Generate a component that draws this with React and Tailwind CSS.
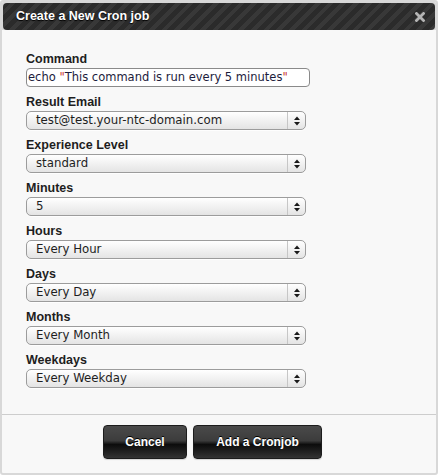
import React from "react";

const fields = [
  ["Result Email", "test@test.your-ntc-domain.com"],
  ["Experience Level", "standard"],
  ["Minutes", "5"],
  ["Hours", "Every Hour"],
  ["Days", "Every Day"],
  ["Months", "Every Month"],
  ["Weekdays", "Every Weekday"],
];

function Label({ children }) {
  return (
    <div className="h-[15px] text-[12.5px] leading-[15px] font-bold text-[#1e1e1e] font-['Liberation_Sans',Arial,sans-serif]">
      {children}
    </div>
  );
}

function Select({ value }) {
  return (
    <div className="mt-[1px] flex h-[19px] w-[280px] items-stretch rounded-[5px] border border-[#9c9c9c] bg-[linear-gradient(to_bottom,#ffffff,#e4e4e4)] shadow-[0_1px_0_rgba(255,255,255,0.8)]">
      <span className="flex flex-1 items-center pl-[9px] text-[11.75px] leading-none text-[#1e1e1e] font-['DejaVu_Sans',sans-serif]">
        {value}
      </span>
      <span className="flex w-[18px] items-center justify-center border-l border-[#c6c6c6]">
        <svg width="6" height="10" viewBox="0 0 6 10">
          <polygon points="0,4 3,0.5 6,4" fill="#1a1a1a" />
          <polygon points="0,6 3,9.5 6,6" fill="#1a1a1a" />
        </svg>
      </span>
    </div>
  );
}

function Button({ children, w }) {
  return (
    <button
      className={`${w} h-[34px] rounded-[4px] border border-[#1c1c1c] bg-[linear-gradient(to_bottom,#4a4a4a_0%,#3c3c3c_46%,#0c0c0c_58%,#222222_82%,#333333_100%)] text-[12px] font-bold text-white font-['Liberation_Sans',Arial,sans-serif] [text-shadow:0_-1px_0_#000] shadow-[0_1px_1px_rgba(0,0,0,0.15)]`}
    >
      {children}
    </button>
  );
}

export default function App() {
  return (
    <div className="flex h-[475px] w-[438px] flex-col overflow-hidden rounded-[3px] border-2 border-[#d8d8d8] bg-[#f8f8f8]">
      <div className="bg-[#d8d8d8] px-[1px] pt-[1px]">
        <div className="flex h-[27px] items-center justify-between rounded-[4px] bg-[repeating-linear-gradient(135deg,#2b2b2b_0px,#2b2b2b_5px,#383838_5px,#383838_9px)] pl-[13px] pr-[10px]">
          <span className="text-[12.5px] font-bold text-white font-['Liberation_Sans',Arial,sans-serif] [text-shadow:0_1px_1px_#000]">
            Create a New Cron job
          </span>
          <svg width="10" height="10" viewBox="0 0 10 10">
            <path d="M1.5 1.5 L8.5 8.5 M8.5 1.5 L1.5 8.5" stroke="#b4b4b4" strokeWidth="2.8" strokeLinecap="square" />
          </svg>
        </div>
      </div>

      <div className="flex flex-col pl-[24px] pt-[22px]">
        <Label>Command</Label>
        <div className="mt-[1px] flex h-[19px] w-[284px] items-center rounded-[4px] border border-[#8a8a8a] bg-white pl-[1px] text-[11.5px] leading-none text-[#1c1c3c] font-['DejaVu_Sans',sans-serif]">
          <span>
            echo <span className="text-[#c8302c]">"</span>This command is run every 5 minutes
            <span className="text-[#c8302c]">"</span>
          </span>
        </div>

        <div className="mt-[8px] flex flex-col gap-[8px]">
          {fields.map(([label, value]) => (
            <div key={label} className="flex flex-col">
              <Label>{label}</Label>
              <Select value={value} />
            </div>
          ))}
        </div>
      </div>

      <div className="mt-[26px] border-t border-[#cdcdcd]" />

      <div className="flex gap-[6px] pl-[101px] pt-[10px]">
        <Button w="w-[84px]">Cancel</Button>
        <Button w="w-[129px]">Add a Cronjob</Button>
      </div>
    </div>
  );
}
